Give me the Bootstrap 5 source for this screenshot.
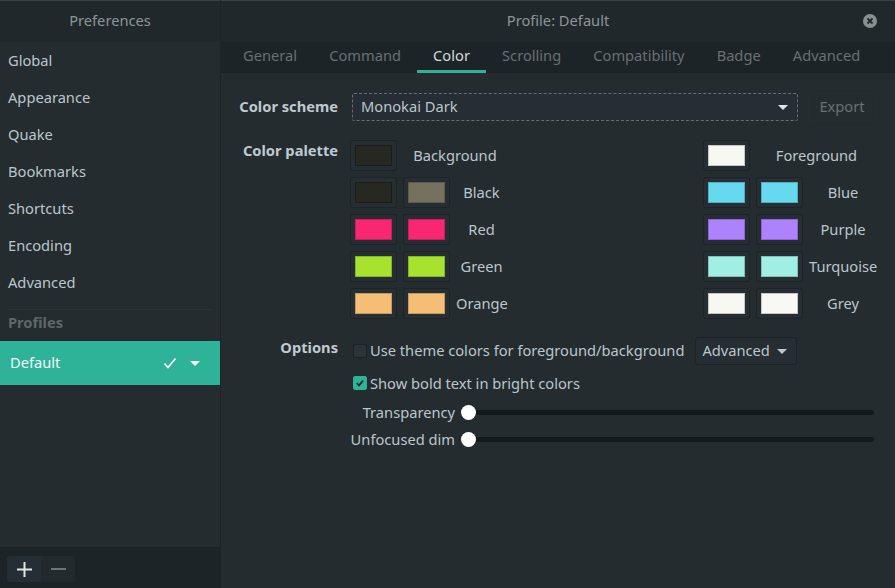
<!DOCTYPE html>
<html lang="en">
<head>
    <meta charset="UTF-8">
    <meta name="viewport" content="width=device-width, initial-scale=1.0">
    <title>Preferences</title>
    <link href="https://cdn.jsdelivr.net/npm/bootstrap@5.3.0/dist/css/bootstrap.min.css" rel="stylesheet">
    <style>
        html, body { height: 100%; }
        body {
            background-color: #242c30;
            color: #bcc6cc;
            font-family: "Noto Sans", sans-serif;
            font-size: 14.67px;
            line-height: 20px;
            overflow: hidden;
        }
        .win { width: 895px; height: 588px; }
        .side { width: 221px; flex-shrink: 0; border-right: 1px solid #1d2427; }
        .main-area { min-width: 0; }
        .side-title, .main-title {
            height: 42px;
            padding-bottom: 3px;
            background-color: #20282b;
            border-top: 1px solid #3a4144;
            color: #8d9598;
        }
        .close-ico { position: absolute; top: 13px; right: 18px; }
        .txt-up { padding-bottom: 2px; }
        .side-nav .list-group-item {
            background: transparent;
            border: 0;
            color: #bcc6cc;
            height: 37px;
            padding: 0 8px;
            line-height: 37px;
        }
        .side-sep { height: 1px; background-color: #2b3337; margin: 8px 8px 0 8px; border: 0; opacity: 1; }
        .side-head { font-weight: 700; color: #5e6669; height: 31px; line-height: 24px; padding: 0 8px; }
        .side-active {
            height: 44px;
            background-color: #2eb398;
            color: #f4fbf9;
            padding: 0 20px 0 10px;
        }
        .caret-gap { margin-left: 13px; }
        .side-bottom { height: 41px; background-color: #1c2427; border-top: 1px solid #1a2023; padding: 8px 7px; }
        .mini-btn { width: 34px; height: 26px; padding: 0; border: 0; border-radius: 0; display: flex; align-items: center; justify-content: center; }
        .mini-on { background-color: #262e35; border-radius: 3px 0 0 3px; }
        .mini-off { background-color: #232a2d; border-radius: 0 3px 3px 0; }
        .tabbar { background-color: #1d2427; height: 31px; border-bottom: 1px solid #191f22; flex-wrap: nowrap; }
        .tabbar .nav-link {
            color: #687073;
            padding: 0 16.06px;
            height: 31px;
            line-height: 26px;
            border-bottom: 3px solid transparent;
        }
        .tabbar .nav-link.active { color: #d3dade; border-bottom-color: #2eb398; }
        .tabbar .nav-link:first-child { margin-left: 6px; }
        .pane { padding: 20px 0 0 18px; }
        .lbl { width: 99px; text-align: right; font-weight: 700; flex-shrink: 0; color: #bfcad0; }
        .combo {
            width: 446px; height: 28px;
            margin-left: 14px;
            background-color: #262d34;
            border: 1px dashed #676e72;
            border-radius: 2px;
            color: #bcc6cc;
            padding: 0 9px 0 8px;
            font-size: 14.67px;
        }
        .export { width: 68px; height: 28px; margin-left: 10px; background-color: #252c30; border: 1px solid #262e32; color: #697174; padding: 0 0 2px; font-size: 14.67px; border-radius: 2px; }
        .palette-row { margin-top: 19px; }
        .palette {
            display: grid;
            grid-template-columns: 47px 47px 51px 1fr 47px 47px 68px;
            column-gap: 6px;
            row-gap: 6px;
            margin-left: 12px;
            width: 527px;
        }
        .swatch { height: 31px; padding: 4px; background-color: #262d33; border: 1px solid #1d2326; border-radius: 3px; display: flex; }
        .chip { flex: 1; border: 1px solid; }
        .plabel { line-height: 31px; text-align: center; white-space: nowrap; }
        .wide-2 { grid-column: span 2; }
        .opts-row { margin-top: 18px; }
        .opts-col { margin-left: 15px; flex: 1; }
        .opt-check[type=checkbox] { width: 14px; height: 14px; margin: 0 3px 0 0; border-radius: 2px; background-color: #2c3437; border: 1px solid #1b2124; flex-shrink: 0; }
        .opt-check[type=checkbox]:checked { background-color: #2eb398; border-color: #2eb398; background-image: url("data:image/svg+xml,%3csvg xmlns='http://www.w3.org/2000/svg' viewBox='0 0 14 14'%3e%3cpath fill='none' stroke='%23202a2d' stroke-width='2' d='M3.2 7l2.6 2.8 4.8-5.6'/%3e%3c/svg%3e"); }
        .adv { width: 102px; height: 28px; margin-left: 11px; background-color: #262d33; border: 1px solid #1d2326; border-radius: 3px; color: #bcc6cc; padding: 0 9px 0 6px; font-size: 14.67px; }
        .bold-row { margin-top: 8px; }
        .slide-first { margin-top: 6px; }
        .slide-row { height: 27px; margin-left: -3px; }
        .slide-lbl { width: 105px; text-align: right; flex-shrink: 0; white-space: nowrap; }
        .slide-row .form-range { width: 413px; margin-left: 6px; height: 16px; }
        .form-range::-webkit-slider-runnable-track { height: 5px; background-color: #141a1c; border-radius: 3px; }
        .form-range::-webkit-slider-thumb { width: 15px; height: 15px; margin-top: -5px; background-color: #fff; border-radius: 50%; }
    </style>
</head>
<body>
    <div class="win d-flex">
        <!-- Sidebar -->
        <div class="side d-flex flex-column">
            <div class="side-title d-flex align-items-center justify-content-center">Preferences</div>
            <div class="list-group list-group-flush side-nav">
                <a class="list-group-item">Global</a>
                <a class="list-group-item">Appearance</a>
                <a class="list-group-item">Quake</a>
                <a class="list-group-item">Bookmarks</a>
                <a class="list-group-item">Shortcuts</a>
                <a class="list-group-item">Encoding</a>
                <a class="list-group-item">Advanced</a>
            </div>
            <hr class="side-sep">
            <div class="side-head">Profiles</div>
            <div class="side-active d-flex align-items-center">
                <span class="flex-grow-1 txt-up">Default</span>
                <svg width="14" height="12" viewBox="0 0 14 12"><path d="M1.5 6.5l3.5 4 7.5-9" fill="none" stroke="#fff" stroke-width="1.7"/></svg>
                <svg class="caret-gap" width="10" height="5" viewBox="0 0 10 5"><path d="M0 0h10L5 5z" fill="#fff"/></svg>
            </div>
            <div class="flex-grow-1"></div>
            <div class="side-bottom d-flex">
                <button class="btn mini-btn mini-on"><svg width="15" height="15" viewBox="0 0 15 15"><path d="M0 7.5h15M7.5 0v15" stroke="#dfe5e2" stroke-width="2"/></svg></button>
                <button class="btn mini-btn mini-off"><svg width="15" height="2" viewBox="0 0 15 2"><path d="M0 1h15" stroke="#6d7578" stroke-width="2"/></svg></button>
            </div>
        </div>

        <!-- Main -->
        <div class="main-area flex-grow-1 d-flex flex-column">
            <div class="main-title position-relative d-flex align-items-center justify-content-center">
                Profile: Default
                <svg class="close-ico" width="14" height="14" viewBox="0 0 14 14"><circle cx="7" cy="7" r="7" fill="#898f91"/><path d="M4.5 4.5l5 5M9.5 4.5l-5 5" stroke="#20282b" stroke-width="1.8"/></svg>
            </div>
            <ul class="nav tabbar">
                <li class="nav-link">General</li>
                <li class="nav-link">Command</li>
                <li class="nav-link active">Color</li>
                <li class="nav-link">Scrolling</li>
                <li class="nav-link">Compatibility</li>
                <li class="nav-link">Badge</li>
                <li class="nav-link">Advanced</li>
            </ul>
            <div class="pane">
                <div class="d-flex align-items-center">
                    <div class="lbl txt-up">Color scheme</div>
                    <button class="btn combo d-flex align-items-center justify-content-between">
                        <span class="txt-up">Monokai Dark</span>
                        <svg width="10" height="5" viewBox="0 0 10 5"><path d="M0 0h10L5 5z" fill="#dfe5e8"/></svg>
                    </button>
                    <button class="btn export">Export</button>
                </div>

                <div class="d-flex palette-row">
                    <div class="lbl">Color palette</div>
                    <div class="palette">
                        <div class="swatch"><span class="chip sw-bg"></span></div>
                        <div class="plabel wide-2">Background</div>
                        <div></div>
                        <div class="swatch"><span class="chip sw-fg"></span></div>
                        <div class="plabel wide-2">Foreground</div>

                        <div class="swatch"><span class="chip sw-bg"></span></div>
                        <div class="swatch"><span class="chip sw-gr"></span></div>
                        <div class="plabel">Black</div>
                        <div></div>
                        <div class="swatch"><span class="chip sw-bl"></span></div>
                        <div class="swatch"><span class="chip sw-bl"></span></div>
                        <div class="plabel">Blue</div>

                        <div class="swatch"><span class="chip sw-re"></span></div>
                        <div class="swatch"><span class="chip sw-re"></span></div>
                        <div class="plabel">Red</div>
                        <div></div>
                        <div class="swatch"><span class="chip sw-pu"></span></div>
                        <div class="swatch"><span class="chip sw-pu"></span></div>
                        <div class="plabel">Purple</div>

                        <div class="swatch"><span class="chip sw-gn"></span></div>
                        <div class="swatch"><span class="chip sw-gn"></span></div>
                        <div class="plabel">Green</div>
                        <div></div>
                        <div class="swatch"><span class="chip sw-tq"></span></div>
                        <div class="swatch"><span class="chip sw-tq"></span></div>
                        <div class="plabel">Turquoise</div>

                        <div class="swatch"><span class="chip sw-or"></span></div>
                        <div class="swatch"><span class="chip sw-or"></span></div>
                        <div class="plabel">Orange</div>
                        <div></div>
                        <div class="swatch"><span class="chip sw-fg"></span></div>
                        <div class="swatch"><span class="chip sw-wh"></span></div>
                        <div class="plabel">Grey</div>
                    </div>
                </div>

                <div class="d-flex opts-row">
                    <div class="lbl">Options</div>
                    <div class="opts-col">
                        <div class="d-flex align-items-center">
                            <input class="form-check-input opt-check" type="checkbox">
                            <span class="txt-up">Use theme colors for foreground/background</span>
                            <button class="btn adv d-flex align-items-center justify-content-between">
                                <span class="txt-up">Advanced</span>
                                <svg width="10" height="5" viewBox="0 0 10 5"><path d="M0 0h10L5 5z" fill="#bcc6cc"/></svg>
                            </button>
                        </div>
                        <div class="d-flex align-items-center bold-row">
                            <input class="form-check-input opt-check" type="checkbox" checked>
                            <span>Show bold text in bright colors</span>
                        </div>
                        <div class="d-flex align-items-center slide-row slide-first">
                            <span class="slide-lbl txt-up">Transparency</span>
                            <input class="form-range" type="range" value="0">
                        </div>
                        <div class="d-flex align-items-center slide-row">
                            <span class="slide-lbl txt-up">Unfocused dim</span>
                            <input class="form-range" type="range" value="0">
                        </div>
                    </div>
                </div>
            </div>
        </div>
    </div>
    <script src="https://cdn.jsdelivr.net/npm/bootstrap@5.3.0/dist/js/bootstrap.bundle.min.js"></script>
    <script>
        // palette colours: [fill, border]
        var chips = {
            'sw-bg': ['#272822', '#1c1d18'], 'sw-gr': ['#75715e', '#5e5a4b'],
            'sw-re': ['#f92672', '#c71e5b'], 'sw-gn': ['#a6e22e', '#85b525'],
            'sw-or': ['#f4bf75', '#c39960'], 'sw-fg': ['#f8f8f2', '#c6c6c2'],
            'sw-wh': ['#f9f8f5', '#c7c6c4'], 'sw-bl': ['#66d9ef', '#52aebf'],
            'sw-pu': ['#ae81ff', '#8b67cc'], 'sw-tq': ['#a1efe4', '#81bfb6']
        };
        Object.keys(chips).forEach(function (k) {
            document.querySelectorAll('.' + k).forEach(function (el) {
                el.style.backgroundColor = chips[k][0];
                el.style.borderColor = chips[k][1];
            });
        });
    </script>
</body>
</html>
